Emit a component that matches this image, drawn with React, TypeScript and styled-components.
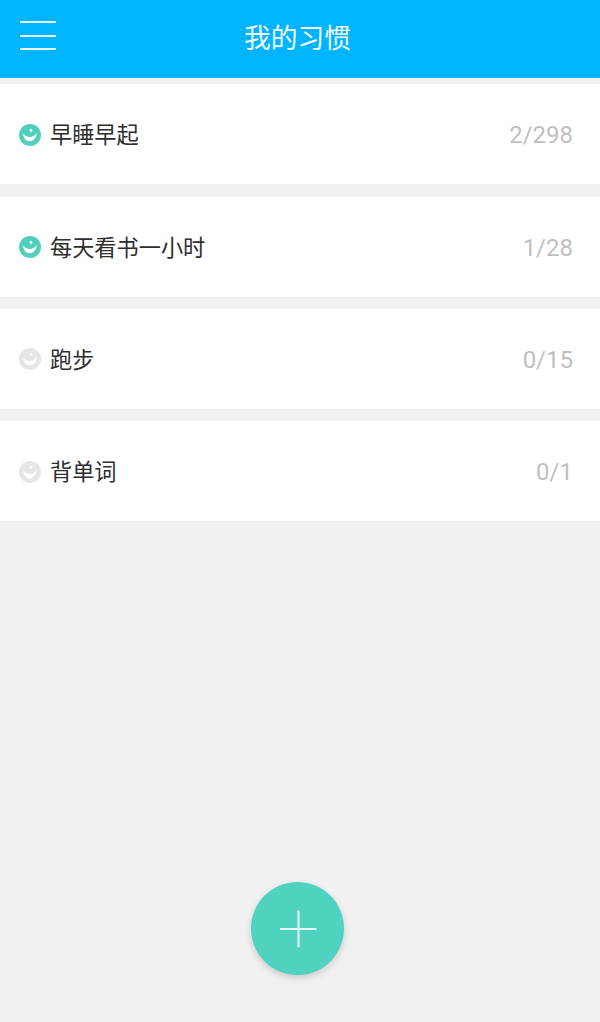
import React from 'react';
import styled, { createGlobalStyle } from 'styled-components';

const Global = createGlobalStyle`
  html, body { margin: 0; padding: 0; background: #f1f1f1; }
  #root { height: 1022px; }
`;
const Page = styled.div`
  position: relative; width: 600px; height: 1022px; overflow: hidden; background: #f1f1f1;
  font-family: "Roboto", "Noto Sans CJK SC", sans-serif;
`;
const Header = styled.header`
  height: 78px; background: #00b4ff; display: flex; align-items: center; justify-content: center; position: relative;
`;
const Title = styled.h1`
  margin: 0 5px 0 0; font-size: 26.8px; font-weight: 400; color: #f4fbff; line-height: 34px;
`;
const Menu = styled.div`
  position: absolute; left: 20px; top: 21px; width: 36px; height: 29px;
  display: flex; flex-direction: column; justify-content: space-between;
`;
const MenuBar = styled.span`
  display: block; height: 2px; background: #e6f7ff;
`;
const List = styled.main`
  display: flex; flex-direction: column; gap: 12.4px; padding-top: 6.2px;
`;
const Row = styled.div`
  height: 100px; background: #fff; display: flex; align-items: center; padding: 0 27px 0 19px;
`;
const FaceIcon = styled.svg`
  flex: none; margin-top: 1px; width: 22px; height: 22px;
`;
const Name = styled.span`
  flex: 1; margin: 2px 0 0 9px; font-size: 22.2px; color: #2e2e2e; line-height: 30px;
`;
const Count = styled.span`
  margin-top: 2px; font-size: 24px; color: #bfbfbf; line-height: 30px;
`;
const Fab = styled.button`
  position: absolute; left: 251px; top: 882px; width: 93px; height: 93px; padding: 0; border: 0; border-radius: 50%;
  background: #4fd2bf; box-shadow: 0 3px 7px rgba(0,0,0,.16);
  display: flex; align-items: center; justify-content: center;
`;

const Face = ({ on }: { on: boolean }) => (
  <FaceIcon viewBox="0 0 22 22">
    <circle cx="11" cy="11" r="11" fill={on ? '#4fd0bd' : '#e6e6e6'} />
    <path d="M4 9.5 C5 19.5 16 20.5 18 9 C15.5 11.5 13.5 13 11 13 C8.5 13 6.5 12 4 9.5 Z" fill="#fff" />
    <circle cx="12" cy="6.5" r="1.4" fill="#fff" />
  </FaceIcon>
);

const items = [
  { name: '早睡早起', count: '2/298', on: true },
  { name: '每天看书一小时', count: '1/28', on: true },
  { name: '跑步', count: '0/15', on: false },
  { name: '背单词', count: '0/1', on: false },
];

export default function App() {
  return (
    <Page>
      <Global />
      <Header>
        <Menu><MenuBar /><MenuBar /><MenuBar /></Menu>
        <Title>我的习惯</Title>
      </Header>
      <List>
        {items.map((it) => (
          <Row key={it.name}>
            <Face on={it.on} />
            <Name>{it.name}</Name>
            <Count>{it.count}</Count>
          </Row>
        ))}
      </List>
      <Fab aria-label="add">
        <svg width="38" height="38" viewBox="0 0 38 38">
          <path d="M19.5 0.5V37.5M1 19H37.5" stroke="#e8fbf8" strokeWidth="2" fill="none" />
        </svg>
      </Fab>
    </Page>
  );
}
